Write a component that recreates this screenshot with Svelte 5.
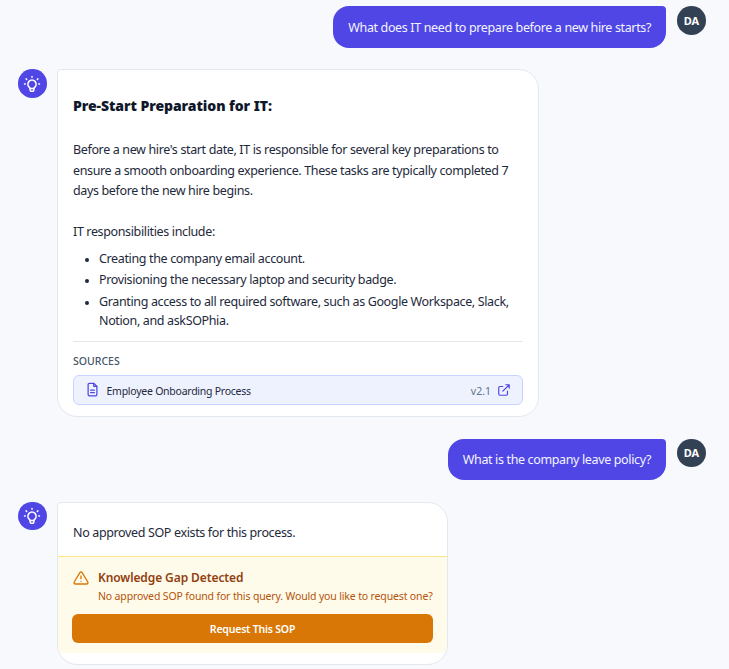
<script>
  const sources = [{ title: "Employee Onboarding Process", version: "v2.1" }];
  const items = [
    "Creating the company email account.",
    "Provisioning the necessary laptop and security badge.",
    "Granting access to all required software, such as Google Workspace, Slack, Notion, and askSOPhia.",
  ];
</script>

{#snippet bulb()}
  <div class="avatar bot">
    <svg width="18" height="18" viewBox="0 0 24 24" fill="none" stroke="white" stroke-width="2" stroke-linecap="round" stroke-linejoin="round">
      <path d="M12 2v1M4.200 5.200l.7.7M19.800 5.200l-.7.7M2 12h1M21 12h1" />
      <path d="M8.500 16.500a5.500 5.500 0 1 1 7 0c-.6.5-1 1-1 1.500h-5c0-.5-.4-1-1-1.500z" />
      <path d="M9.500 18v2a1.500 1.500 0 0 0 1.500 1.500h2a1.500 1.500 0 0 0 1.500-1.500v-2" />
    </svg>
  </div>
{/snippet}

<div class="chat">
  <div class="row user">
    <div class="bubble">What does IT need to prepare before a new hire starts?</div>
    <div class="avatar me">DA</div>
  </div>

  <div class="row">
    {@render bulb()}
    <div class="card answer">
      <h3>Pre-Start Preparation for IT:</h3>
      <p>Before a new hire's start date, IT is responsible for several key preparations to ensure a smooth onboarding experience. These tasks are typically completed 7 days before the new hire begins.</p>
      <p class="lead">IT responsibilities include:</p>
      <ul>
        {#each items as item}
          <li>{item}</li>
        {/each}
      </ul>
      <div class="sources">
        <div class="sources-label">SOURCES</div>
        {#each sources as source}
          <div class="source">
            <svg class="doc" width="15" height="15" viewBox="0 0 24 24" fill="none" stroke="#4f46e5" stroke-width="2" stroke-linecap="round" stroke-linejoin="round">
              <path d="M14 2H7a2 2 0 0 0-2 2v16a2 2 0 0 0 2 2h10a2 2 0 0 0 2-2V7z" />
              <path d="M14 2v5h5M9 13h6M9 17h6" />
            </svg>
            <span class="source-title">{source.title}</span>
            <span class="version">{source.version}</span>
            <svg width="14" height="14" viewBox="0 0 24 24" fill="none" stroke="#4f46e5" stroke-width="2" stroke-linecap="round" stroke-linejoin="round">
              <path d="M18 14v5a2 2 0 0 1-2 2H5a2 2 0 0 1-2-2V8a2 2 0 0 1 2-2h5" />
              <path d="M15 3h6v6M10 14 21 3" />
            </svg>
          </div>
        {/each}
      </div>
    </div>
  </div>

  <div class="row user">
    <div class="bubble">What is the company leave policy?</div>
    <div class="avatar me">DA</div>
  </div>

  <div class="row">
    {@render bulb()}
    <div class="card gap-card">
      <p class="none">No approved SOP exists for this process.</p>
      <div class="gap">
        <div class="gap-head">
          <svg width="16" height="16" viewBox="0 0 24 24" fill="none" stroke="#d97706" stroke-width="2" stroke-linecap="round" stroke-linejoin="round">
            <path d="M10.300 3.900 1.800 18a2 2 0 0 0 1.700 3h17a2 2 0 0 0 1.700-3L13.700 3.900a2 2 0 0 0-3.400 0z" />
            <path d="M12 9v4M12 17h.01" />
          </svg>
          <div>
            <div class="gap-title">Knowledge Gap Detected</div>
            <div class="gap-text">No approved SOP found for this query. Would you like to request one?</div>
          </div>
        </div>
        <button>Request This SOP</button>
      </div>
    </div>
  </div>
</div>

<style>
  :global(body) {
    background: #f8f9fc;
  }

  .chat {
    font-family: "Noto Sans", sans-serif;
    font-size: 12.500px;
    letter-spacing: -0.36px;
    color: #1e293b;
    padding: 6px 23px 0 18px;
    display: flex;
    flex-direction: column;
    gap: 21.750px;
    height: 663px;
    overflow: hidden;
  }

  .row {
    display: flex;
    gap: 10.500px;
    align-items: flex-start;
  }

  .row.user {
    justify-content: flex-end;
    gap: 11px;
  }

  .avatar {
    width: 28.500px;
    height: 28.500px;
    border-radius: 50%;
    flex: none;
    display: flex;
    align-items: center;
    justify-content: center;
  }

  .bot {
    background: #4f46e5;
  }

  .me {
    width: 29px;
    background: #334155;
    color: white;
    font-size: 11px;
    font-weight: 700;
    letter-spacing: 0;
  }

  .bubble {
    background: #4f46e5;
    color: #f3f4ff;
    padding: 11.500px 15px 10.500px;
    line-height: 19.500px;
    border-radius: 16px 4px 16px 16px;
  }

  .card {
    background: white;
    border: 1px solid #e2e8f0;
    border-radius: 4px 20px 20px 20px;
    box-sizing: border-box;
    overflow: hidden;
  }

  .answer {
    width: 482px;
    padding: 26px 15px 11px;
  }

  h3 {
    margin: 0 0 24px;
    font-size: 14px;
    font-weight: 900;
    letter-spacing: -0.07px;
    line-height: 20px;
    color: #0f172a;
  }

  p {
    margin: 0;
    line-height: 20.500px;
  }

  .lead {
    margin-top: 20.500px;
  }

  ul {
    margin: 6px 0 0;
    padding: 0 0 0 26px;
    line-height: 19.500px;
  }

  li + li {
    margin-top: 2px;
  }

  li::marker {
    font-size: 10px;
  }

  .sources {
    margin-top: 10px;
    border-top: 1px solid #e5e7eb;
    padding-top: 12px;
  }

  .sources-label {
    font-size: 10.500px;
    font-weight: 500;
    letter-spacing: 0;
    color: #475569;
    line-height: 14px;
    margin-bottom: 7px;
  }

  .source {
    display: flex;
    align-items: center;
    height: 30px;
    box-sizing: border-box;
    padding: 0 11px;
    background: #eef2ff;
    border: 1px solid #c7d2fe;
    border-radius: 6px;
    font-size: 10.500px;
    letter-spacing: -0.25px;
  }

  .doc {
    margin-right: 6.500px;
  }

  .source-title {
    flex: 1;
    padding-top: 2px;
    color: #1e293b;
  }

  .version {
    color: #64748b;
    margin-right: 6px;
    padding-top: 2px;
    letter-spacing: 0;
  }

  .gap-card {
    width: 391px;
    padding-bottom: 11px;
  }

  .none {
    padding: 20px 15px 13px;
  }

  .gap {
    background: #fffbeb;
    border-top: 1px solid #fde68a;
    padding: 11px 14px 10px;
  }

  .gap-head {
    display: flex;
    gap: 9px;
    margin-bottom: 9px;
    align-items: flex-start;
  }

  .gap-head svg {
    margin-top: 2px;
    margin-left: 1px;
  }

  .gap-title {
    font-size: 12px;
    font-weight: 600;
    letter-spacing: -0.1px;
    color: #92400e;
    line-height: 20px;
  }

  .gap-text {
    font-size: 10.500px;
    letter-spacing: -0.15px;
    color: #b45309;
    line-height: 17px;
  }

  button {
    display: block;
    width: 100%;
    height: 29px;
    border: none;
    border-radius: 6px;
    background: #d97706;
    color: white;
    font-family: inherit;
    font-size: 10.500px;
    font-weight: 600;
    letter-spacing: -0.2px;
  }
</style>
